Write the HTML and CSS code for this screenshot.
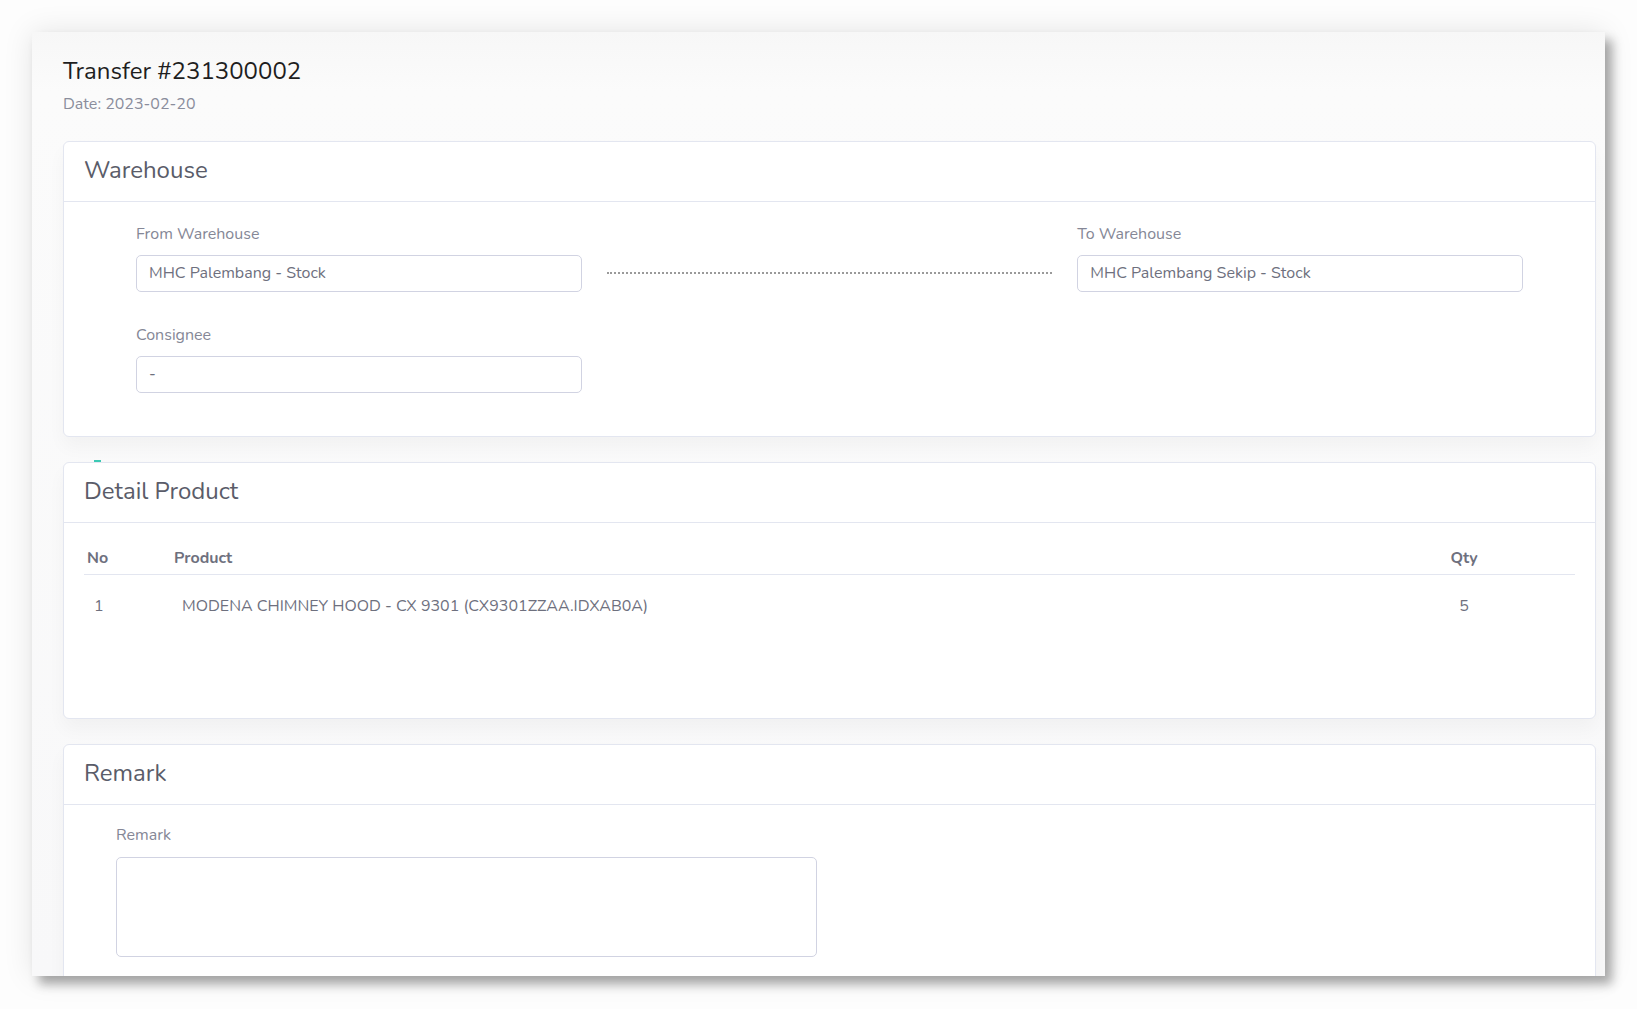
FILE: index.html
```html
<!DOCTYPE html>
<html lang="en">
  <head>
    <meta charset="UTF-8" />
    <meta name="viewport" content="width=device-width, initial-scale=1.0" />
    <title>Transfer #231300002</title>
    <link rel="stylesheet" href="styles.css">
  </head>
  <body>
    <div class="window">
      <div class="page-head">
        <h1>Transfer #231300002</h1>
        <p class="date">Date: 2023-02-20</p>
      </div>

      <div class="card">
        <div class="card-header">Warehouse</div>
        <div class="card-body">
          <div class="warehouse-row">
            <div class="field">
              <label>From Warehouse</label>
              <div class="input">MHC Palembang - Stock</div>
            </div>
            <div class="dots"></div>
            <div class="field">
              <label>To Warehouse</label>
              <div class="input">MHC Palembang Sekip - Stock</div>
            </div>
            <div class="field">
              <label>Consignee</label>
              <div class="input">-</div>
            </div>
          </div>
        </div>
      </div>

      <div class="card card-detail">
        <span class="mark"></span>
        <div class="card-header">Detail Product</div>
        <div class="card-body">
          <table class="product-table">
            <thead>
              <tr>
                <th class="col-no">No</th>
                <th class="col-product">Product</th>
                <th class="col-qty">Qty</th>
              </tr>
            </thead>
            <tbody>
              <tr>
                <td class="col-no">1</td>
                <td class="col-product">MODENA CHIMNEY HOOD - CX 9301 (CX9301ZZAA.IDXAB0A)</td>
                <td class="col-qty">5</td>
              </tr>
            </tbody>
          </table>
        </div>
      </div>

      <div class="card">
        <div class="card-header">Remark</div>
        <div class="card-body remark-body">
          <label>Remark</label>
          <div class="textarea"></div>
        </div>
      </div>
    </div>
  </body>
</html>
```

FILE: styles.css
```css
html,
body {
  margin: 0;
  height: 100%;
  overflow: hidden;
}

body {
  background: #fdfdfd;
  font-family: "Nunito", "Lato", "Noto Sans", sans-serif;
  color: #858796;
  padding: 32px 0 0 32px;
  box-sizing: border-box;
}

.window {
  width: 1573px;
  height: 944px;
  overflow: hidden;
  box-sizing: border-box;
  padding: 0 9px 0 31px;
  background: linear-gradient(#f7f7f7, #fbfbfb 60px, #f8f8f9);
  box-shadow: 7px 8px 10px rgba(0, 0, 0, 0.32), 0 0 28px rgba(0, 0, 0, 0.1);
}

.page-head {
  padding-top: 23px;
  height: 109px;
  box-sizing: border-box;
}

h1 {
  margin: 0;
  font-size: 24px;
  font-weight: 400;
  color: #1e1e1e;
  line-height: 32px;
}

.date {
  margin: 6px 0 0;
  font-size: 16px;
  line-height: 22px;
  color: #8a8d9c;
}

.card {
  position: relative;
  background: #fff;
  border: 1px solid #e3e6f0;
  border-radius: 6px;
  margin-bottom: 25px;
  box-shadow: 0 10px 18px rgba(0, 0, 0, 0.035);
}

.card-header {
  height: 59px;
  line-height: 57px;
  padding: 0 20px;
  font-size: 24px;
  color: #5a5c69;
  border-bottom: 1px solid #e3e6f0;
}

.card-body {
  padding: 20px;
}

label {
  display: block;
  font-size: 16px;
  line-height: 20px;
  margin-bottom: 11px;
  color: #858796;
}

.warehouse-row {
  display: grid;
  grid-template-columns: 1fr 1fr 1fr;
  column-gap: 25px;
  row-gap: 33px;
  padding: 2px 52px 23px;
}

.input {
  height: 37px;
  line-height: 35px;
  border: 1px solid #d1d3e2;
  border-radius: 5px;
  padding: 0 12px;
  font-size: 16px;
  color: #6e707e;
  box-sizing: border-box;
}

.dots {
  align-self: end;
  margin-bottom: 18px;
  border-top: 2px dotted #9a9a9a;
}

.mark {
  position: absolute;
  left: 30px;
  top: -3px;
  width: 7px;
  height: 2px;
  background: #3cc9b4;
}

.product-table {
  width: 100%;
  border-collapse: collapse;
  font-size: 16px;
  margin-bottom: 72px;
}

.product-table th {
  font-weight: 700;
  color: #6e707e;
  padding: 5px 4px 6px;
  border-bottom: 1px solid #e3e6f0;
  line-height: 20px;
}

.product-table td {
  padding: 21px 4px 10px;
  line-height: 20px;
  color: #6e707e;
}

.product-table .col-no {
  width: 72px;
  text-align: left;
}

.product-table th.col-no {
  padding-left: 3px;
}

.product-table td.col-no {
  padding-left: 10px;
}

.product-table .col-product {
  text-align: left;
}

.product-table td.col-product {
  padding-left: 12px;
}

.product-table .col-qty {
  width: 214px;
  text-align: center;
}

.remark-body {
  padding: 20px 52px 40px 52px;
}

.remark-body label {
  margin-bottom: 12px;
}

.textarea {
  width: 701px;
  height: 100px;
  border: 1px solid #d1d3e2;
  border-radius: 5px;
  box-sizing: border-box;
}
```
